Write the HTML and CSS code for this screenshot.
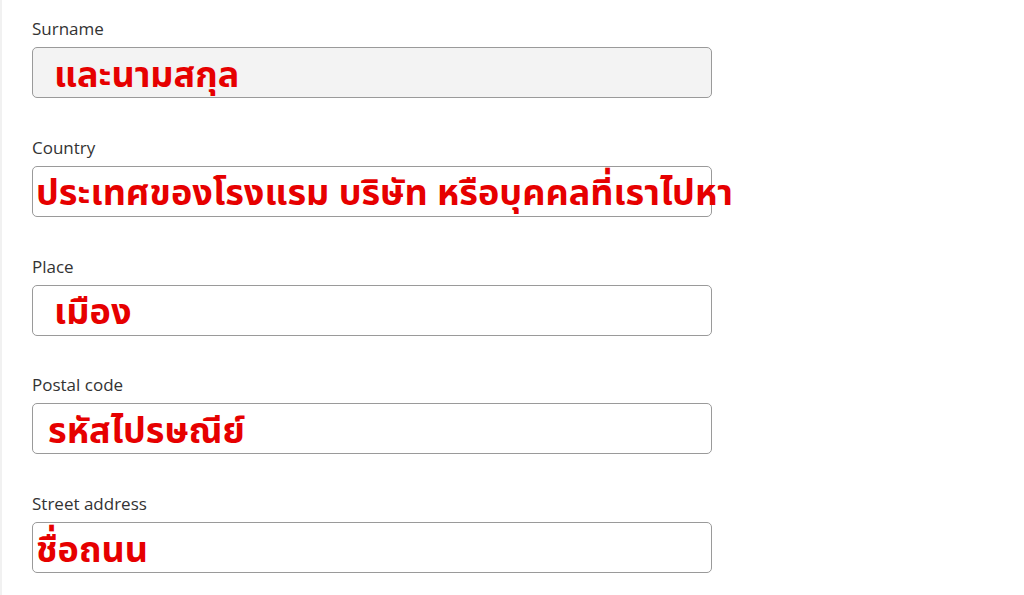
FILE: index.html
```html
<!DOCTYPE html>
<html lang="th">
<head>
<meta charset="utf-8">
<title>Address form</title>
<link rel="stylesheet" href="styles.css">
</head>
<body>
<div class="page">
  <form class="form">
    <div class="field">
      <div class="label">Surname</div>
      <div class="input input--disabled"><span class="note note--indent">และนามสกุล</span></div>
    </div>
    <div class="field">
      <div class="label">Country</div>
      <div class="input"><span class="note note--tight">ประเทศของโรงแรม บริษัท หรือบุคคลที่เราไปหา</span></div>
    </div>
    <div class="field">
      <div class="label">Place</div>
      <div class="input"><span class="note note--indent">เมือง</span></div>
    </div>
    <div class="field">
      <div class="label">Postal code</div>
      <div class="input"><span class="note note--mid">รหัสไปรษณีย์</span></div>
    </div>
    <div class="field">
      <div class="label">Street address</div>
      <div class="input"><span class="note note--tight">ชื่อถนน</span></div>
    </div>
  </form>
</div>
</body>
</html>
```
FILE: styles.css
```css
html, body {
  margin: 0;
  padding: 0;
  background: #ffffff;
}
.page {
  width: 1024px;
  height: 595px;
  overflow: hidden;
  box-sizing: border-box;
  border-left: 2px solid #f1f1f1;
  padding: 17px 0 0 30px;
  font-family: "Open Sans", "Noto Sans", sans-serif;
}
.form {
  display: flex;
  flex-direction: column;
  gap: 37.8px;
  width: 680px;
}
.field {
  display: flex;
  flex-direction: column;
  gap: 7px;
}
.label {
  font-size: 17px;
  line-height: 23px;
  color: #333333;
}
.input {
  box-sizing: border-box;
  height: 51px;
  border: 1px solid #9a9a9a;
  border-radius: 5px;
  background: #ffffff;
  display: flex;
  align-items: center;
  white-space: nowrap;
  overflow: visible;
}
.input--disabled {
  background: #f3f3f3;
}
.note {
  color: #e60000;
  font-family: Tahoma, "Noto Sans Thai", Loma, Garuda, "Noto Sans", "DejaVu Sans", sans-serif;
  font-weight: bold;
  font-size: 36px;
  line-height: 1;
  padding-top: 6px;
}
.note--indent { padding-left: 21px; }
.note--mid { padding-left: 15px; }
.note--tight { padding-left: 3px; }
```
